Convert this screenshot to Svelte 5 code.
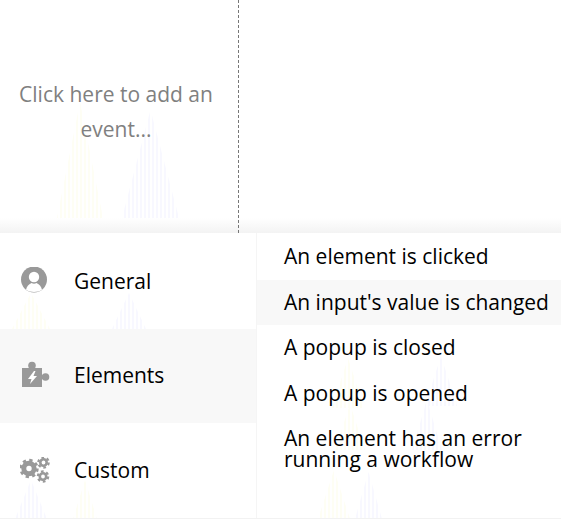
<script>
  // faint stripes behind the panel: [x, top, width, height, colour]
  const marks = [
    [57, 102, 46, 116, 'y'], [122, 110, 57, 108, 'b'],
    [12, 293, 38, 36, 'y'], [112, 293, 34, 36, 'b'],
    [15, 480, 32, 39, 'b'], [73, 480, 24, 39, 'y'],
    [332, 358, 32, 50, 'y'], [425, 356, 32, 50, 'b'],
    [335, 404, 30, 46, 'y'], [412, 400, 30, 50, 'b'],
    [318, 470, 32, 49, 'y'], [355, 472, 27, 47, 'b'],
  ];
  const general = ['General', 'Elements', 'Custom'];
  const events = [
    'An element is clicked',
    "An input's value is changed",
    'A popup is closed',
    'A popup is opened',
    'An element has an error running a workflow',
  ];
</script>

<div class="page">
  <svg class="marks" width="561" height="519" aria-hidden="true">
    <defs>
      <pattern id="py" width="4" height="4" patternUnits="userSpaceOnUse"><rect width="2" height="4" fill="#fefef4" /></pattern>
      <pattern id="pb" width="4" height="4" patternUnits="userSpaceOnUse"><rect width="2" height="4" fill="#f8f8ff" /></pattern>
    </defs>
    {#each marks as m}
      <polygon
        points="{m[0]},{m[1] + m[3]} {m[0] + m[2] / 2},{m[1]} {m[0] + m[2]},{m[1] + m[3]}"
        fill="url(#p{m[4]})"
      />
    {/each}
  </svg>

  <div class="top">
    <div class="slot">
      <p>Click here to add an event...</p>
    </div>
  </div>

  <div class="panel">
    <div class="cats">
      {#each general as name, i}
        <div class="cat" class:on={i === 1}>
          <span class="icon">
            {#if i === 0}
              <svg width="28" height="28" viewBox="0 0 28 28">
                <circle cx="14" cy="12.5" r="13" fill="#999" />
                <circle cx="14" cy="10" r="5.200" fill="#fff" />
                <path d="M6 23c.5-3.500 2.500-5.500 5.500-7 1.600.9 3.400.9 5 0 3 1.500 5 3.500 5.500 7-2.200 1.300-5 2-8 2s-5.800-.7-8-2z" fill="#fff" />
              </svg>
            {:else if i === 1}
              <svg class="puzzle" width="30" height="28" viewBox="0 0 30 28">
                <g fill="#999">
                  <rect x="2" y="6" width="20" height="19" />
                  <circle cx="12" cy="3.500" r="3.800" />
                  <circle cx="25.500" cy="15" r="3.800" />
                </g>
                <path d="M14 9l-6 8h3.500L10 22l7-8h-3.500L15.500 9z" fill="#fff" />
              </svg>
            {:else}
              <svg width="30" height="28" viewBox="0 0 30 28">
                <g fill="none" stroke="#999">
                  <circle cx="9" cy="11.500" r="5.200" stroke-width="5" />
                  <circle cx="9" cy="11.500" r="8.200" stroke-width="3" stroke-dasharray="3.200 3.240" />
                  <circle cx="23.500" cy="5.500" r="3.200" stroke-width="2.600" />
                  <circle cx="23.500" cy="5.500" r="5.200" stroke-width="2.200" stroke-dasharray="2.700 2.750" />
                  <circle cx="23" cy="19.500" r="3.200" stroke-width="2.600" />
                  <circle cx="23" cy="19.500" r="5.200" stroke-width="2.200" stroke-dasharray="2.700 2.750" />
                </g>
              </svg>
            {/if}
          </span>
          <span class="name">{name}</span>
        </div>
      {/each}
    </div>
    <div class="events">
      {#each events as e, i}
        <div class="event" class:on={i === 1}><span>{e}</span></div>
      {/each}
    </div>
  </div>
</div>

<style>
  :global(body) {
    margin: 0;
    background: #fff;
  }
  .page {
    position: relative;
    width: 561px;
    height: 519px;
    overflow: hidden;
    font-family: 'Open Sans', sans-serif;
    background: #fff;
  }
  .marks {
    position: absolute;
    left: 0;
    top: 0;
  }
  .top {
    position: relative;
    height: 233px;
    background: linear-gradient(to bottom, transparent 218px, #f3f3f3 233px);
  }
  .slot {
    width: 239px;
    height: 233px;
    box-sizing: border-box;
    border-right: 1px dashed #777;
    padding: 77px 6px 0 0;
    text-align: center;
  }
  .slot p {
    margin: 0;
    font-size: 21px;
    line-height: 35px;
    color: #808080;
  }
  .panel {
    position: relative;
    display: flex;
    height: 285px;
    border-bottom: 1px solid #f2f2f2;
  }
  .cats {
    width: 256px;
    border-right: 1px solid #f5f5f5;
    flex: none;
  }
  .cat {
    display: flex;
    align-items: center;
    height: 95px;
    padding-left: 20px;
    font-size: 21px;
    color: #000;
  }
  .cat:first-child {
    height: 96px;
  }
  .cat.on {
    height: 94px;
    background: #f8f8f8;
  }
  .cat:not(:first-child) .name {
    margin-top: -2px;
  }
  .icon {
    width: 54px;
    display: flex;
  }
  .puzzle {
    overflow: visible;
  }
  .events {
    flex: 1;
  }
  .event {
    height: 45.500px;
    display: flex;
    align-items: center;
    padding-left: 27px;
    font-size: 21px;
    line-height: 21px;
    color: #000;
  }
  .event:first-child {
    height: 47px;
  }
  .event:last-child {
    height: 66px;
  }
  .event span {
    max-width: 270px;
  }
  .event.on {
    height: 45px;
    background: #f8f8f8;
  }
</style>
